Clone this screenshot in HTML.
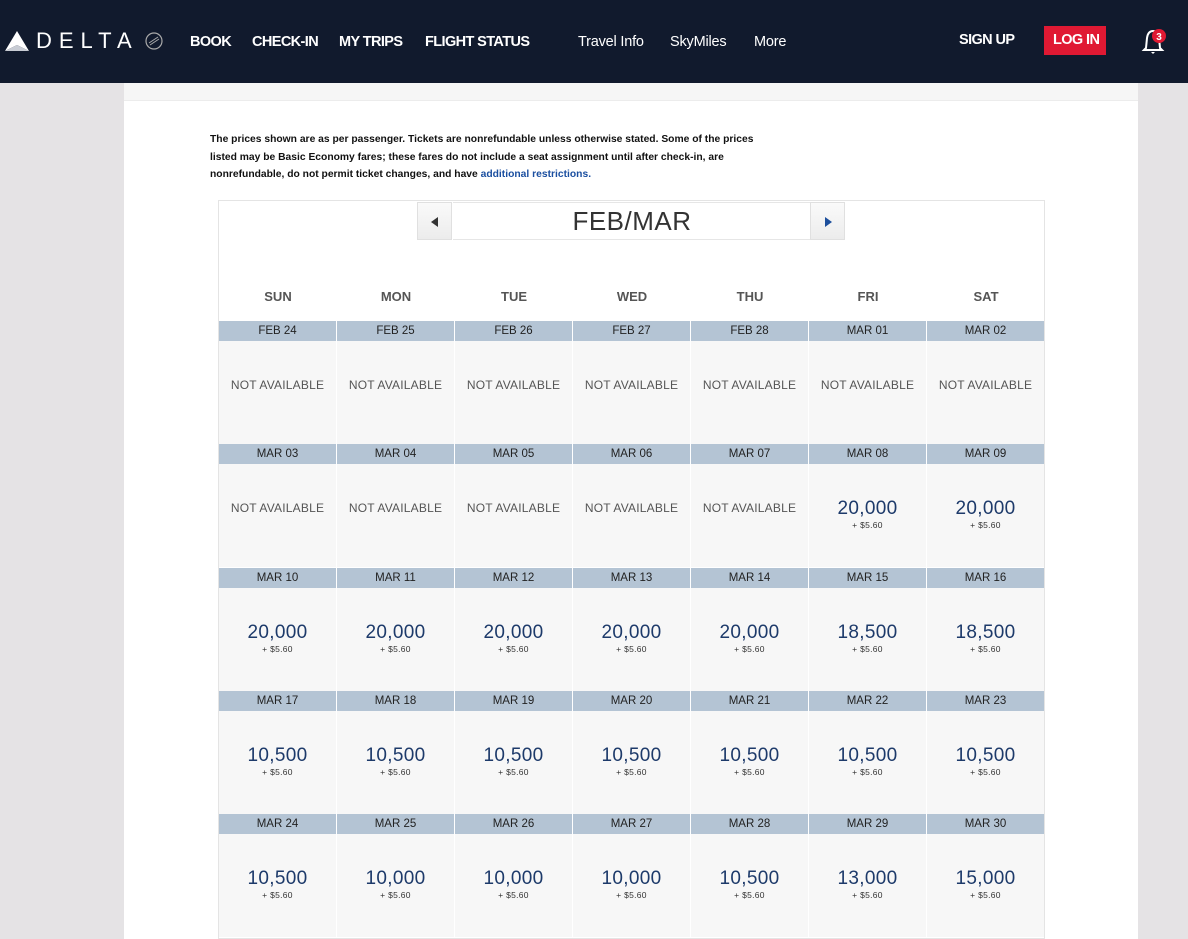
<!DOCTYPE html>
<html><head><meta charset="utf-8"><style>
*{margin:0;padding:0;box-sizing:border-box}
body{width:1188px;height:939px;overflow:hidden;background:#e5e3e5;font-family:"Liberation Sans",sans-serif;position:relative}
.nav{position:absolute;left:0;top:0;width:1188px;height:83px;background:#111a2d;color:#fff}
.nav span{position:absolute;font-weight:bold;font-size:14.5px;top:34px;letter-spacing:-0.6px}
.nav .l{font-weight:normal;font-size:14.5px;letter-spacing:-0.2px}
.main{position:absolute;left:124px;top:83px;width:1014px;height:856px;background:#fff}
.strip{position:absolute;left:0;top:0;width:1014px;height:18px;background:#f6f6f6;border-bottom:1px solid #ececec}
.note{position:absolute;left:86px;top:48px;width:700px;font-size:10.3px;font-weight:bold;line-height:17.5px;color:#111;letter-spacing:0;white-space:nowrap}
.note a{color:#1b4fa0;text-decoration:none}
.cal{position:absolute;left:218px;top:200px;width:827px;height:739px;border:1px solid #e4e4e4;background:#fff}
.btn{position:absolute;top:1px;width:35px;height:38px;background:linear-gradient(#fafafa,#ececec);border:1px solid #e0e0e0}
.title{position:absolute;left:234px;top:1px;width:358px;height:38px;border-top:1px solid #e6e6e6;border-bottom:1px solid #e6e6e6;text-align:center;font-size:26px;line-height:36px;color:#333;letter-spacing:0.5px}
.dow{position:absolute;top:88px;width:118px;text-align:center;font-size:13px;font-weight:bold;color:#555}
.hd{position:absolute;height:20px;width:117px;background:#b4c4d4;text-align:center;font-size:11.5px;line-height:20px;color:#222}
.cell{position:absolute;width:117px;height:103px;background:#f7f7f7;text-align:center;color:#555}
.na{font-size:12px;padding-top:37px;letter-spacing:0.2px}
.p{font-size:19px;color:#1d3a6a;padding-top:35px;line-height:20px;letter-spacing:0.3px}
.p small{display:block;font-size:8.5px;color:#333;line-height:12px}
</style></head><body>
<div class="nav">
<svg style="position:absolute;left:5px;top:31px" width="24" height="20" viewBox="0 0 24 20"><path d="M12 0 L24 20 L12 14 L0 20 Z" fill="#fff"/><path d="M12 14 L24 20 L0 20Z" fill="#c8ccd4"/></svg>
<span style="left:36px;top:28px;font-size:22px;font-weight:normal;letter-spacing:7px">DELTA</span>
<svg style="position:absolute;left:144px;top:31px" width="20" height="20"><circle cx="10" cy="10" r="8" stroke="#aaa" fill="none" stroke-width="1.2"/><path d="M5 12 L14 6 M6 14 L15 8" stroke="#aaa"/></svg>
<span style="left:190px">BOOK</span><span style="left:252px">CHECK-IN</span><span style="left:339px">MY TRIPS</span><span style="left:425px">FLIGHT STATUS</span>
<span class="l" style="left:578px">Travel Info</span><span class="l" style="left:670px">SkyMiles</span><span class="l" style="left:754px">More</span>
<span style="left:959px;top:32px">SIGN UP</span>
<div style="position:absolute;left:1044px;top:26px;width:62px;height:29px;background:#e01933"></div>
<span style="left:1053px;top:32px">LOG IN</span>
<svg style="position:absolute;left:1140px;top:26px" width="30" height="30" viewBox="0 0 30 30"><path d="M4 24 L6 22 L7 12 Q8 5 13 5 Q18 5 19 12 L20 22 L22 24 Z" fill="none" stroke="#fff" stroke-width="2"/><path d="M11 26 L15 26 L13 28Z" fill="#fff"/><circle cx="19" cy="10" r="7" fill="#e01933"/><text x="19" y="14" font-size="10" font-weight="bold" fill="#fff" text-anchor="middle" font-family="Liberation Sans">3</text></svg>
</div>
<div class="main"><div class="strip"></div>
<div class="note">The prices shown are as per passenger. Tickets are nonrefundable unless otherwise stated. Some of the prices<br>listed may be Basic Economy fares; these fares do not include a seat assignment until after check-in, are<br>nonrefundable, do not permit ticket changes, and have <a>additional restrictions.</a></div>
</div>
<div class="cal">
<div class="btn" style="left:198px"><svg width="35" height="38"><path d="M13 19 L20 14 L20 24Z" fill="#333"/></svg></div>
<div class="title">FEB/MAR</div>
<div class="btn" style="left:591px"><svg width="35" height="38"><path d="M21 19 L14 14 L14 24Z" fill="#1d4f9c"/></svg></div>
<div id="g"></div>
</div>
<script>
var d=["SUN","MON","TUE","WED","THU","FRI","SAT"],g=document.getElementById("g"),h="";
var dates=[["FEB 24","FEB 25","FEB 26","FEB 27","FEB 28","MAR 01","MAR 02"],["MAR 03","MAR 04","MAR 05","MAR 06","MAR 07","MAR 08","MAR 09"],["MAR 10","MAR 11","MAR 12","MAR 13","MAR 14","MAR 15","MAR 16"],["MAR 17","MAR 18","MAR 19","MAR 20","MAR 21","MAR 22","MAR 23"],["MAR 24","MAR 25","MAR 26","MAR 27","MAR 28","MAR 29","MAR 30"]];
var pr=[[0,0,0,0,0,0,0],[0,0,0,0,0,"20,000","20,000"],["20,000","20,000","20,000","20,000","20,000","18,500","18,500"],["10,500","10,500","10,500","10,500","10,500","10,500","10,500"],["10,500","10,000","10,000","10,000","10,500","13,000","15,000"]];
for(var i=0;i<7;i++)h+='<div class="dow" style="left:'+(i*118)+'px">'+d[i]+'</div>';
for(var r=0;r<5;r++){var y=120+r*123.3;for(var i=0;i<7;i++){var x=i*118;h+='<div class="hd" style="left:'+x+'px;top:'+y+'px">'+dates[r][i]+'</div>';var p=pr[r][i];h+='<div class="cell '+(p?'p':'na')+'" style="left:'+x+'px;top:'+(y+20)+'px">'+(p?p+'<small>+ $5.60</small>':'NOT AVAILABLE')+'</div>';}}
g.innerHTML=h;
</script>
</body></html>
